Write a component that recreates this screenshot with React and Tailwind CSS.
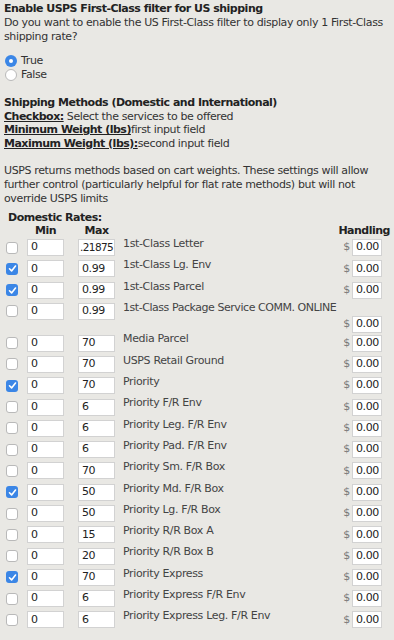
import React from "react";

const rows = [
  { c: false, max: ".21875", label: "1st-Class Letter" },
  { c: true, max: "0.99", label: "1st-Class Lg. Env" },
  { c: true, max: "0.99", label: "1st-Class Parcel" },
  { c: false, max: "0.99", label: "1st-Class Package Service COMM. ONLINE", wrap: true },
  { c: false, max: "70", label: "Media Parcel" },
  { c: false, max: "70", label: "USPS Retail Ground" },
  { c: true, max: "70", label: "Priority" },
  { c: false, max: "6", label: "Priority F/R Env" },
  { c: false, max: "6", label: "Priority Leg. F/R Env" },
  { c: false, max: "6", label: "Priority Pad. F/R Env" },
  { c: false, max: "70", label: "Priority Sm. F/R Box" },
  { c: true, max: "50", label: "Priority Md. F/R Box" },
  { c: false, max: "50", label: "Priority Lg. F/R Box" },
  { c: false, max: "15", label: "Priority R/R Box A" },
  { c: false, max: "20", label: "Priority R/R Box B" },
  { c: true, max: "70", label: "Priority Express" },
  { c: false, max: "6", label: "Priority Express F/R Env" },
  { c: false, max: "6", label: "Priority Express Leg. F/R Env" },
];

function Check({ on }) {
  if (on)
    return (
      <span className="flex h-[12px] w-[12px] items-center justify-center rounded-[3px] bg-[#3b86e6]">
        <svg width="9" height="9" viewBox="0 0 9 9">
          <path d="M1.5 4.8 L3.6 6.9 L7.5 2" fill="none" stroke="#fff" strokeWidth="1.6" strokeLinecap="round" strokeLinejoin="round" />
        </svg>
      </span>
    );
  return <span className="block h-[12px] w-[12px] rounded-[3px] border border-[#b9b9b9] bg-white" />;
}

function Box({ v, w }) {
  const tight = v.length > 4;
  return (
    <span
      className={`flex h-[17px] items-center whitespace-nowrap border border-[#d2d2d2] bg-white text-[#222] ${
        tight ? "pl-[1px] text-[10.5px] tracking-[-0.6px]" : "pl-[3px] text-[11px] tracking-[-0.4px]"
      } ${w}`}
    >
      {v}
    </span>
  );
}

function Handling() {
  return (
    <span className="mr-[8px] flex items-center gap-[2px]">
      <span className="text-[11px] text-[#777]">$</span>
      <Box v="0.00" w="w-[30px]" />
    </span>
  );
}

export default function App() {
  return (
    <div
      className="min-h-[640px] w-[394px] bg-[#e9e8e4] px-[4px] pt-[2px] text-[11px] tracking-[-0.37px] text-[#333]"
      style={{ fontFamily: '"DejaVu Sans", Verdana, sans-serif' }}
    >
      <div className="leading-[14px] whitespace-nowrap">
        <div className="font-bold tracking-[-0.5px] text-[#222]">Enable USPS First-Class filter for US shipping</div>
        <div>Do you want to enable the US First-Class filter to display only 1 First-Class</div>
        <div>shipping rate?</div>
      </div>

      <div className="mt-[10px] leading-[14px]">
        <div className="flex items-center gap-[4px] pl-[1px]">
          <span className="flex h-[12px] w-[12px] items-center justify-center rounded-full bg-[#3b86e6]">
            <span className="h-[4px] w-[4px] rounded-full bg-white" />
          </span>
          <span>True</span>
        </div>
        <div className="flex items-center gap-[4px] pl-[1px]">
          <span className="h-[12px] w-[12px] rounded-full border border-[#b9b9b9] bg-white" />
          <span>False</span>
        </div>
      </div>

      <div className="mt-[14px] leading-[13.5px] whitespace-nowrap">
        <div className="font-bold tracking-[-0.5px] text-[#222]">Shipping Methods (Domestic and International)</div>
        <div>
          <span className="font-bold tracking-[-0.5px] text-[#222] underline">Checkbox:</span> Select the services to be offered
        </div>
        <div>
          <span className="font-bold tracking-[-0.5px] text-[#222] underline">Minimum Weight (lbs)</span>first input field
        </div>
        <div>
          <span className="font-bold tracking-[-0.5px] text-[#222] underline">Maximum Weight (lbs):</span>second input field
        </div>
      </div>

      <div className="mt-[14px] leading-[14px] whitespace-nowrap">
        <div>USPS returns methods based on cart weights. These settings will allow</div>
        <div>further control (particularly helpful for flat rate methods) but will not</div>
        <div>override USPS limits</div>
      </div>

      <div className="mt-[5px] pl-[4px] font-bold tracking-[-0.5px] leading-[13px] text-[#222]">Domestic Rates:</div>
      <div className="flex leading-[13px] font-bold tracking-[-0.5px] text-[#222]">
        <span className="w-[23px]" />
        <span className="w-[37px] text-center">Min</span>
        <span className="w-[14px]" />
        <span className="w-[37px] text-center">Max</span>
        <span className="flex-1 text-right">Handling</span>
      </div>

      <div className="flex flex-col">
        {rows.map((r, i) =>
          r.wrap ? (
            <div key={i} className="flex h-[31.6px] items-start pt-[2px]">
              <span className="flex h-[17px] w-[23px] items-center pl-[2px]">
                <Check on={r.c} />
              </span>
              <Box v="0" w="w-[37px]" />
              <span className="w-[14px]" />
              <Box v={r.max} w="w-[37px]" />
              <span className="ml-[8px] -mt-[2px] flex-1 whitespace-nowrap leading-[14px] tracking-[-0.45px] text-[#444]">{r.label}</span>
              <span className="mt-[13px] -ml-[40px]">
                <Handling />
              </span>
            </div>
          ) : (
            <div key={i} className="flex h-[21.3px] items-center">
              <span className="flex w-[23px] items-center pl-[2px]">
                <Check on={r.c} />
              </span>
              <Box v="0" w="w-[37px]" />
              <span className="w-[14px]" />
              <Box v={r.max} w="w-[37px]" />
              <span className="ml-[8px] flex-1 self-start whitespace-nowrap leading-[14px] tracking-[-0.35px] text-[#444]">{r.label}</span>
              <Handling />
            </div>
          )
        )}
      </div>
    </div>
  );
}
